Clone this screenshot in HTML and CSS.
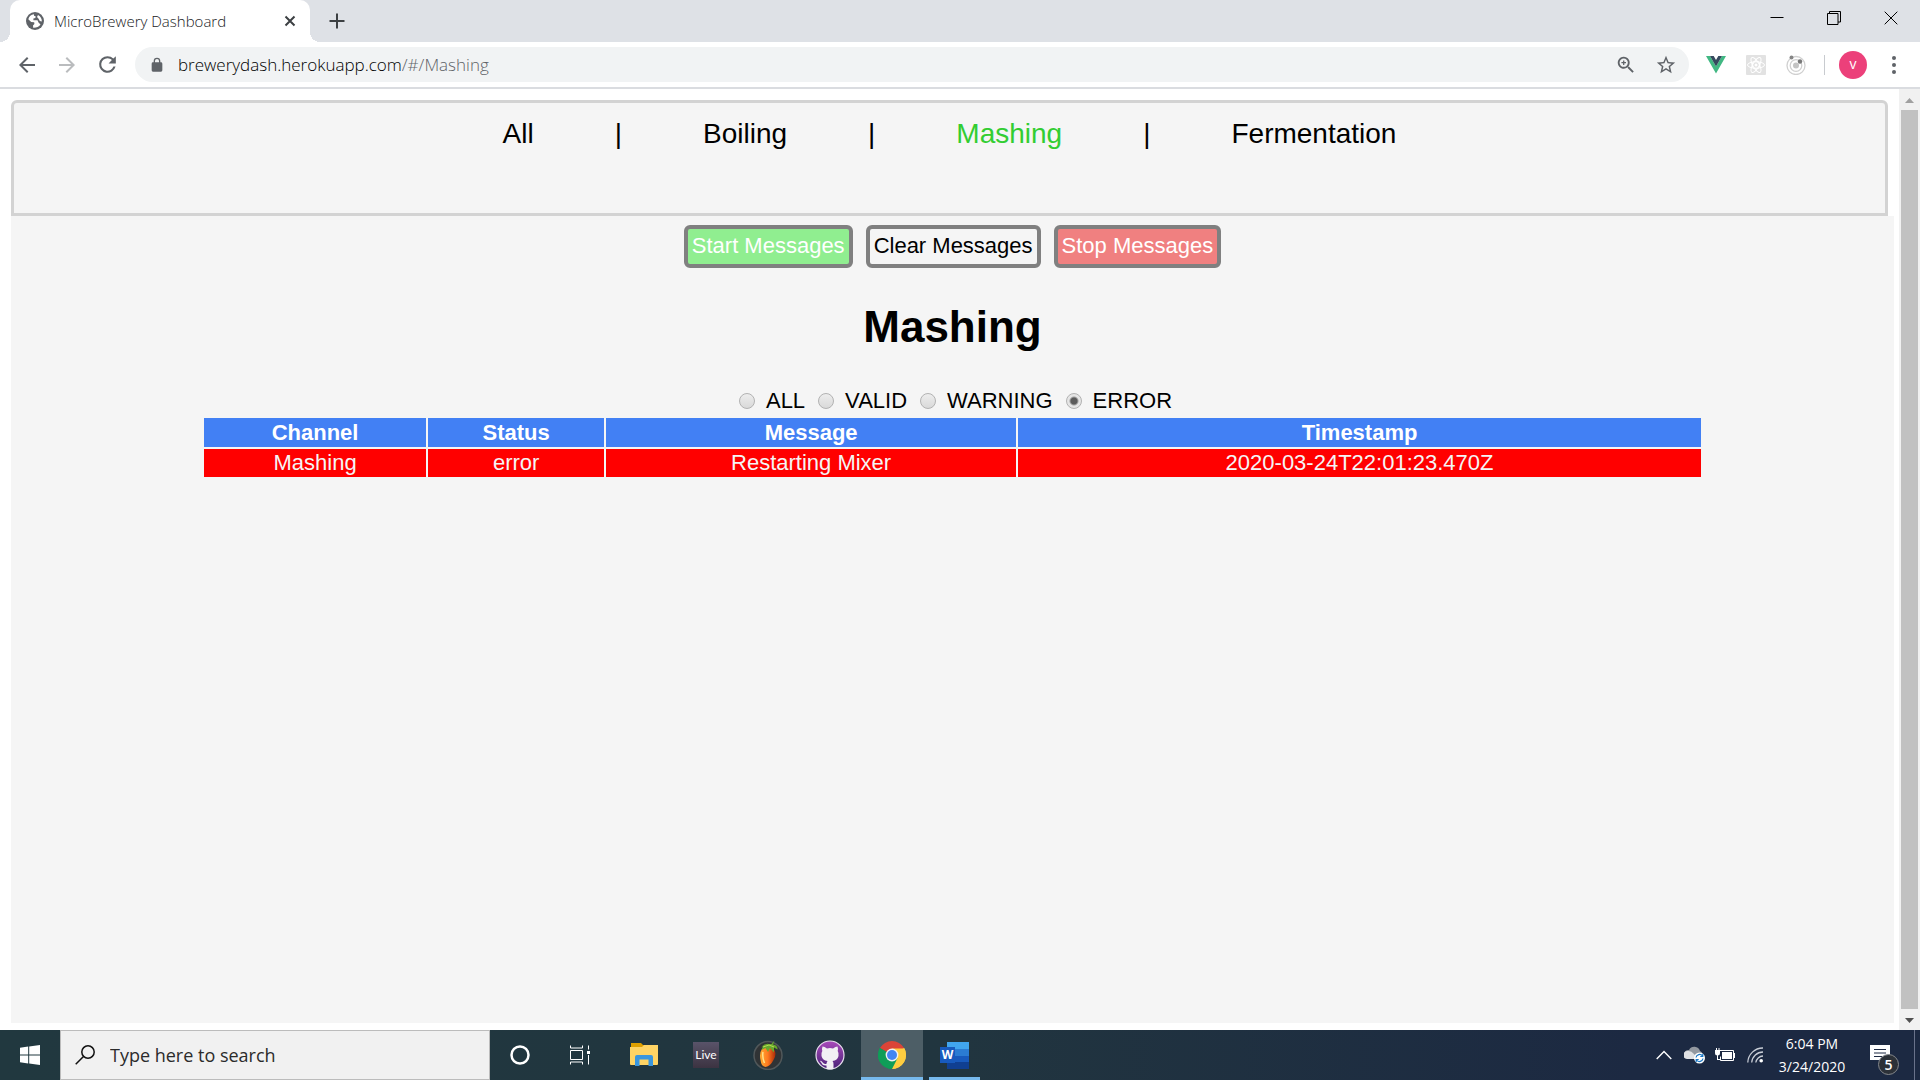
FILE: index.html
```html
<!DOCTYPE html>
<html lang="en">
<head>
<meta charset="utf-8">
<title>MicroBrewery Dashboard</title>
<link rel="stylesheet" href="styles.css">
</head>
<body>
<header class="browser">
  <div class="tab-strip">
    <div class="tab">
      <svg class="favicon" viewBox="0 0 18 18"><circle cx="9" cy="9" r="9" fill="#5f6368"/><path d="M8 2.200Q3.500 2.800 2.300 7.300L5.200 10 8.200 10.200 8.400 12 7 13.600 7.200 15.800Q12 16 14.500 12.500L12.500 10.600 11.500 8.200H7.400V6.600L9.400 6 9.600 4.200 8 3.800zM12 3l-1 2 1.600 1.800 1.200 2.200 2 .6Q16.200 5.500 12 3z" fill="#fff"/></svg>
      <span class="tab-title">MicroBrewery Dashboard</span>
      <button class="icon-button tab-close" aria-label="Close tab"><svg width="12" height="12" viewBox="0 0 12 12"><path d="M1.500 1.500l9 9M10.500 1.500l-9 9" stroke="#3c4043" stroke-width="2"/></svg></button>
    </div>
    <button class="icon-button new-tab" aria-label="New tab"><svg width="16" height="16" viewBox="0 0 16 16"><path d="M8 .5v15M.5 8h15" stroke="#3c4043" stroke-width="2"/></svg></button>
    <div class="window-controls">
      <button class="icon-button" aria-label="Minimize"><svg width="14" height="14" viewBox="0 0 14 14"><path d="M.5 6.500h13" stroke="#000"/></svg></button>
      <button class="icon-button" aria-label="Restore"><svg width="14" height="14" viewBox="0 0 14 14"><path d="M.5 2.500h10.500v11H.5zM2.500 2.500V.5h11v10.500h-2.500" fill="none" stroke="#000"/></svg></button>
      <button class="icon-button" aria-label="Close"><svg width="14" height="14" viewBox="0 0 14 14"><path d="M.7.7l12.600 12.600M13.300.7L.7 13.300" stroke="#000"/></svg></button>
    </div>
  </div>
  <div class="toolbar">
    <button class="icon-button tool" aria-label="Back"><svg width="24" height="24" viewBox="0 0 24 24" fill="#5f6368"><path d="M20 11H7.830l5.590-5.590L12 4l-8 8 8 8 1.410-1.410L7.830 13H20z"/></svg></button>
    <button class="icon-button tool" aria-label="Forward"><svg width="24" height="24" viewBox="0 0 24 24" fill="#babcbe"><path d="M4 11h12.170l-5.590-5.590L12 4l8 8-8 8-1.410-1.410L16.170 13H4z"/></svg></button>
    <button class="icon-button tool" aria-label="Reload"><svg width="25" height="25" viewBox="0 0 24 24" fill="#5f6368"><path d="M17.650 6.350A7.950 7.950 0 0 0 12 4a8 8 0 1 0 7.730 10h-2.080A6 6 0 1 1 12 6c1.660 0 3.140.69 4.220 1.780L13 11h7V4z"/></svg></button>
    <div class="omnibox">
      <svg width="16" height="16" viewBox="0 0 24 24" fill="#5f6368"><path d="M18 8h-1V6A5 5 0 0 0 7 6v2H6a2 2 0 0 0-2 2v10a2 2 0 0 0 2 2h12a2 2 0 0 0 2-2V10a2 2 0 0 0-2-2zM9 8V6a3 3 0 0 1 6 0v2z"/></svg>
      <div class="url"><label for="path">brewerydash.herokuapp.com</label><input id="path" type="text" value="/#/Mashing"></div>
      <button class="icon-button tool" aria-label="Zoom"><svg width="22" height="22" viewBox="0 0 24 24" fill="#5f6368"><path d="M15.500 14h-.79l-.28-.27A6.500 6.500 0 1 0 13.730 14.430l.27.28v.79l5 4.990L20.490 19zm-6 0a4.500 4.500 0 1 1 0-9 4.500 4.500 0 0 1 0 9zM12 8.800h-1.800V7H8.800v1.800H7v1.400h1.800V12h1.400v-1.800H12z"/></svg></button>
      <button class="icon-button tool" aria-label="Bookmark"><svg width="22" height="22" viewBox="0 0 24 24" fill="#5f6368"><path d="M22 9.240l-7.190-.62L12 2 9.190 8.630 2 9.240l5.460 4.730L5.820 21 12 17.270 18.180 21l-1.630-7.030zM12 15.400l-3.760 2.270 1-4.280-3.320-2.880 4.380-.38L12 6.100l1.710 4.040 4.380.38-3.320 2.880 1 4.280z"/></svg></button>
    </div>
    <div class="extensions">
      <button class="icon-button tool" aria-label="Vue"><svg width="20" height="18" viewBox="0 0 20 18"><path d="M0 0h4l6 10.500L16 0h4L10 17.500z" fill="#41b883"/><path d="M4 0h3.700L10 4l2.300-4H16l-6 10.500z" fill="#35495e"/></svg></button>
      <button class="icon-button tool" aria-label="React"><svg width="20" height="20" viewBox="0 0 20 20"><rect width="20" height="20" rx="1" fill="#e2e2e2"/><g fill="none" stroke="#fff"><ellipse cx="10" cy="10" rx="8.500" ry="3.200"/><ellipse cx="10" cy="10" rx="8.500" ry="3.200" transform="rotate(60 10 10)"/><ellipse cx="10" cy="10" rx="8.500" ry="3.200" transform="rotate(120 10 10)"/><circle cx="10" cy="10" r="4"/></g><circle cx="10" cy="10" r="1.500" fill="#fff"/></svg></button>
      <button class="icon-button tool" aria-label="Redux"><svg width="20" height="20" viewBox="0 0 20 20"><g fill="none" stroke="#d0d0d0" stroke-width="1.300"><circle cx="10" cy="10.500" r="9"/><circle cx="10" cy="10.500" r="5.800"/></g><circle cx="10" cy="10.500" r="3" fill="#c4c4c4"/><circle cx="5.500" cy="2.500" r="2" fill="#858585"/><circle cx="14" cy="6.500" r="2.200" fill="#777"/></svg></button>
    </div>
    <span class="separator"></span>
    <button class="avatar" aria-label="Profile">v</button>
    <button class="icon-button tool menu" aria-label="Menu"><svg width="4" height="18" viewBox="0 0 4 18" fill="#5f6368"><circle cx="2" cy="2" r="2"/><circle cx="2" cy="9" r="2"/><circle cx="2" cy="16" r="2"/></svg></button>
  </div>
</header>

<div class="viewport">
  <main class="page">
    <nav class="nav">
      <a href="#/">All</a><span>|</span><a href="#/Boiling">Boiling</a><span>|</span><a class="active" href="#/Mashing">Mashing</a><span>|</span><a href="#/Fermentation">Fermentation</a>
    </nav>
    <section class="dashboard">
      <div class="actions">
        <button class="action start">Start Messages</button>
        <button class="action">Clear Messages</button>
        <button class="action stop">Stop Messages</button>
      </div>
      <h1>Mashing</h1>
      <div class="filters">
        <label><input type="radio" name="status">ALL</label>
        <label><input type="radio" name="status">VALID</label>
        <label><input type="radio" name="status">WARNING</label>
        <label><input type="radio" name="status" checked>ERROR</label>
      </div>
      <table class="messages">
        <colgroup><col class="col-channel"><col class="col-status"><col class="col-message"><col class="col-time"></colgroup>
        <thead><tr><th>Channel</th><th>Status</th><th>Message</th><th>Timestamp</th></tr></thead>
        <tbody><tr><td>Mashing</td><td>error</td><td>Restarting Mixer</td><td>2020-03-24T22:01:23.470Z</td></tr></tbody>
      </table>
    </section>
  </main>
  <div class="scrollbar">
    <svg width="21" height="21" viewBox="0 0 21 21"><path d="M6 14l4.500-5 4.500 5z" fill="#a0a0a0"/></svg>
    <div class="thumb"></div>
    <svg width="21" height="21" viewBox="0 0 21 21"><path d="M6 9l4.500 5L15 9z" fill="#505050"/></svg>
  </div>
</div>

<footer class="taskbar">
  <button class="task start-menu" aria-label="Start"><svg width="20" height="20" viewBox="0 0 20 20" fill="#fff"><path d="M0 2.800l8.200-1.200v7.900H0zM9.200 1.400L20 0v9.500H9.200zM0 10.500h8.200v7.900L0 17.200zM9.200 10.500H20V20L9.200 18.600z"/></svg></button>
  <div class="search">
    <svg width="20" height="20" viewBox="0 0 20 20" fill="none" stroke="#111" stroke-width="1.500"><circle cx="13" cy="7" r="6.200"/><path d="M8.500 11.500L.7 19.300"/></svg>
    <input type="text" aria-label="Search" placeholder="Type here to search">
  </div>
  <button class="task" aria-label="Cortana"><svg width="20" height="20" viewBox="0 0 20 20"><circle cx="10" cy="10" r="8.500" fill="none" stroke="#fff" stroke-width="2.500"/></svg></button>
  <button class="task" aria-label="Task view"><svg width="20" height="20" viewBox="0 0 20 20" fill="none" stroke="#fff"><path d="M.5 5.500h12v9H.5zM.5.500v2.500h12V.5M.5 19.500v-2.500h12v2.500M18.500.5v4M18.500 10v9.500"/><path d="M17 6h3v3h-3z" fill="#fff" stroke="none"/></svg></button>
  <div class="apps">
    <button class="task" aria-label="File Explorer"><svg width="28" height="24" viewBox="0 0 28 24"><path d="M1 0h10l2 2h14v20H1z" fill="#dfa000"/><path d="M0 4h12l2-2h14v19a1 1 0 0 1-1 1H1a1 1 0 0 1-1-1z" fill="#ffd464"/><path d="M5 23V14a2 2 0 0 1 2-2h14a2 2 0 0 1 2 2v9h-4.500v-6.500h-9V23z" fill="#3a96dd"/></svg></button>
    <button class="task" aria-label="Live"><span class="live">Live</span></button>
    <button class="task" aria-label="FL Studio"><svg width="30" height="30" viewBox="0 0 30 30"><defs><linearGradient id="fruit" x1="0" x2="1"><stop offset="0" stop-color="#ffac30"/><stop offset=".5" stop-color="#ff7a20"/><stop offset="1" stop-color="#a92a08"/></linearGradient></defs><circle cx="15" cy="15.500" r="14" fill="#303335" stroke="#51585a" stroke-width="1.500"/><path d="M9 9Q6 13 7.500 20q1 7 5 7 5-1 8-7 4-7 0-11-6-4-11.500 0z" fill="url(#fruit)"/><path d="M10 12q-1 5 1.500 11" stroke="#ffe08a" stroke-width="1.500" fill="none"/><path d="M8 8q3-5 8-4l2.500 0 3-3.500-1.500 4q5 1 4.500 5l-3.500-2 0 5-4-4.500-2 4-2.500-4-4 2 1.500-4z" fill="#68a82d"/><path d="M10 7l6-2 5 2" stroke="#b5dc52" fill="none"/></svg></button>
    <button class="task" aria-label="GitHub Desktop"><svg width="30" height="30" viewBox="0 0 30 30"><defs><linearGradient id="git" x2="0" y2="1"><stop stop-color="#a94abb"/><stop offset="1" stop-color="#4a2278"/></linearGradient></defs><circle cx="15" cy="15" r="14" fill="url(#git)" stroke="#e8e0ee" stroke-width="1.200"/><path d="M7.500 6.500q2 0 4.500 2 3-.8 6 0 2.500-2 4.500-2 .8 2 .2 4.500Q24 13 23.500 16q-1 4.500-6 5 1 1 1 3v5q-3.500 1-7 0v-3.500q-4 .6-5-2.500-.8-1.500-1.800-2.200 2-.3 3 1.700 1.300 2 3.800 1.200.2-1.600 1-2.700-5-.5-6-5-.5-3 .8-5Q6.700 8.500 7.500 6.500z" fill="#f2eff4"/></svg></button>
    <button class="task current" aria-label="Google Chrome"><svg width="28" height="28" viewBox="0 0 28 28"><path d="M14 14L1.900 7A14 14 0 0 1 26.100 7z" fill="#db4437"/><path d="M14 14l12.100-7A14 14 0 0 1 14 28z" fill="#ffcd40"/><path d="M14 14v14A14 14 0 0 1 1.900 7z" fill="#0f9d58"/><path d="M14 7.600h12.500a14 14 0 0 1-12.500 20.400l5.500-10.800z" fill="#ffcd40"/><path d="M8.500 17.200L1.900 7A14 14 0 0 0 14 28l5.500-10.800z" fill="#0f9d58"/><circle cx="14" cy="14" r="6.400" fill="#f1f1f1"/><circle cx="14" cy="14" r="5" fill="#4285f4"/></svg></button>
    <button class="task word" aria-label="Word"><span class="word-icon"><span>W</span></span></button>
  </div>
  <div class="tray">
    <svg width="16" height="10" viewBox="0 0 16 10"><path d="M.7 9L8 1.500 15.300 9" fill="none" stroke="#fff" stroke-width="1.400"/></svg>
    <svg class="cloud" width="22" height="18" viewBox="0 0 22 18"><path d="M4 12a4 4 0 0 1 1-8 6 6 0 0 1 11 1 4 4 0 0 1 1 7z" fill="#9298a0"/><path d="M3 13a4 4 0 0 1 1-8q3-.5 6 3l4 5z" fill="#dfe1e4"/><circle cx="15.500" cy="12" r="5.500" fill="#fff"/><path d="M12 11.500a3.600 3.600 0 0 1 6.500-1.500M19 12.500a3.600 3.600 0 0 1-6.500 1.500M18.800 8v2.500h-2.500M12.200 16v-2.500h2.500" fill="none" stroke="#1976c5" stroke-width="1.200"/></svg>
    <svg width="20" height="14" viewBox="0 0 20 14"><path d="M5 2.500h13.500v10H5.500v-4" fill="none" stroke="#fff"/><path d="M7 4h10v7H7zM19 5h1v5h-1zM0 2h5v3a2.500 2.500 0 0 1-5 0zM1 0h1v2H1zM3.500 0h1v2h-1zM2 7h1v4h2v1H2z" fill="#fff"/></svg>
    <svg width="17" height="16" viewBox="0 0 17 16"><g fill="none" stroke="#c9ced7" stroke-width="1.300"><path d="M.8 15.500A15 15 0 0 1 16 1M4.700 15.500A11.500 11.500 0 0 1 16 5M8.800 15.500A7.500 7.500 0 0 1 16 9"/></g><circle cx="14.200" cy="13.800" r="1.800" fill="#fff"/></svg>
    <div class="clock"><time>6:04 PM</time><time>3/24/2020</time></div>
    <button class="icon-button notifications" aria-label="Notifications"><svg width="20" height="20" viewBox="0 0 20 20"><path d="M0 0h20v15h-7l-3.500 4V15H0z" fill="#fff"/><path d="M4 4.500h12M4 8h12M4 11.500h8" stroke="#1d2942"/></svg><span class="badge">5</span></button>
    <span class="show-desktop"></span>
  </div>
</footer>
</body>
</html>
```
FILE: styles.css
```css
* { box-sizing: border-box; }

body {
  margin: 0;
  height: 100vh;
  display: flex;
  flex-direction: column;
  background: #fff;
  font-family: "Liberation Sans", Arial, sans-serif;
  color: #000;
}

svg { display: block; flex: none; }

button {
  margin: 0;
  font-family: inherit;
}

.icon-button,
.task {
  display: flex;
  align-items: center;
  justify-content: center;
  padding: 0;
  border: 0;
  background: none;
}

/* Browser frame */
.tab-strip {
  display: flex;
  height: 42px;
  background: #dee1e6;
}

.tab {
  position: relative;
  display: flex;
  align-items: center;
  width: 300px;
  margin-left: 10px;
  padding: 0 10px 0 16px;
  border-radius: 10px 10px 0 0;
  background: #fff;
}

.tab::before,
.tab::after {
  content: "";
  position: absolute;
  bottom: 0;
  width: 10px;
  height: 10px;
}

.tab::before {
  right: 100%;
  background: radial-gradient(circle at 0 0, #dee1e6 10px, #fff 10px);
}

.tab::after {
  left: 100%;
  background: radial-gradient(circle at 100% 0, #dee1e6 10px, #fff 10px);
}

.favicon { width: 18px; height: 18px; }

.tab-title {
  flex: 1;
  margin-left: 10px;
  font: 300 15px "Open Sans", sans-serif;
  color: #202124;
  white-space: nowrap;
}

.tab-close { width: 20px; height: 20px; }

.new-tab { width: 36px; margin-left: 9px; }

.window-controls {
  display: flex;
  margin: 0 1px 0 auto;
}

.window-controls button {
  width: 57px;
  height: 36px;
}

.toolbar {
  display: flex;
  align-items: center;
  height: 47px;
  padding-left: 7px;
  border-bottom: 2px solid #dadce0;
}

.tool { width: 40px; height: 35px; }

.omnibox {
  flex: 1;
  display: flex;
  align-items: center;
  height: 35px;
  margin: 0 7px 0 8px;
  padding: 0 3px 0 14px;
  border-radius: 18px;
  background: #f1f3f4;
}

.url {
  flex: 1;
  display: flex;
  margin-left: 13px;
  font: 300 17px "Open Sans", sans-serif;
  color: #000;
}

.url input {
  flex: 1;
  padding: 0;
  border: 0;
  outline: 0;
  background: none;
  font: inherit;
  color: #5f6368;
}

.extensions { display: flex; }

.separator {
  width: 1px;
  height: 20px;
  margin: 0 14px 0 8px;
  background: #c8cbcf;
}

.avatar {
  width: 28px;
  height: 28px;
  padding: 0 0 2px;
  border: 0;
  border-radius: 50%;
  background: #ec407a;
  font: 14px "Open Sans", sans-serif;
  color: #fff;
}

.menu { width: 53px; }

/* Dashboard */
.viewport {
  flex: 1;
  display: flex;
  min-height: 0;
}

.page {
  flex: 1;
  display: flex;
  flex-direction: column;
  padding: 11px 5px 7px 11px;
}

.nav {
  display: flex;
  justify-content: center;
  gap: 81px;
  margin-right: 6px;
  padding: 15px 0 63px;
  border: 3px solid lightgray;
  border-radius: 6px 6px 0 0;
  background: whitesmoke;
  font-size: 28px;
  line-height: 32px;
}

.nav a { color: inherit; text-decoration: none; }

.nav .active { color: limegreen; }

.dashboard {
  flex: 1;
  padding-top: 9px;
  background: whitesmoke;
  font-size: 22px;
  line-height: 25px;
}

.actions {
  display: flex;
  justify-content: center;
  gap: 13px;
}

.action {
  padding: 4px 4px 6px;
  border: 4px solid gray;
  border-radius: 6px;
  background: whitesmoke;
  font-size: 22px;
  line-height: 25px;
  color: #000;
}

.start { background: lightgreen; color: #fff; }

.stop { background: lightcoral; color: #fff; }

h1 {
  margin: 34px 0 36px;
  font-size: 44px;
  line-height: 50px;
  text-align: center;
}

.filters {
  display: flex;
  justify-content: center;
  gap: 13px;
  margin-left: 6px;
  padding-bottom: 3px;
}

.filters label {
  display: flex;
  align-items: center;
  gap: 11px;
}

.filters input {
  appearance: none;
  width: 16px;
  height: 16px;
  margin: 0;
  border: 1px solid #b2b2b2;
  border-radius: 50%;
  background: linear-gradient(#ededed, #d9d9d9);
}

.filters input:checked {
  background: radial-gradient(circle, #5b5b5b 3px, #e5e5e5 5px);
}

.messages {
  width: calc(100% - 382px);
  margin: 0 auto;
  border-spacing: 2px;
  table-layout: fixed;
  text-align: center;
}

.col-channel { width: 14.9%; }
.col-status { width: 11.8%; }
.col-message { width: 27.5%; }
.col-time { width: 45.8%; }

.messages th {
  padding: 2px 0;
  background: #4280f4;
  color: #fff;
}

.messages td {
  padding: 1px 0 2px;
  background: red;
  color: whitesmoke;
}

.scrollbar {
  display: flex;
  flex-direction: column;
  width: 21px;
  background: #f1f1f1;
}

.thumb {
  flex: 1;
  margin: 0 2px;
  background: #c1c1c1;
}

/* Taskbar */
.taskbar {
  display: flex;
  height: 50px;
  background: linear-gradient(90deg, #21383f 0, #21353f 50%, #1c2942 85%);
}

.task { width: 60px; height: 50px; }

.search {
  display: flex;
  align-items: center;
  gap: 15px;
  width: 430px;
  padding-left: 14px;
  border: 1px solid #bcbcbc;
  background: #f1f1f1;
}

.search input {
  flex: 1;
  padding: 0;
  border: 0;
  outline: 0;
  background: none;
  font: 18px "Open Sans", sans-serif;
}

.search input::placeholder { color: #2b2b2b; }

.apps { display: flex; margin-left: 3px; }

.apps .task { width: 62px; }

.live {
  width: 26px;
  height: 26px;
  background: linear-gradient(#595369, #3c3341);
  font: 12px/26px Lato, sans-serif;
  color: #fff;
}

.apps .current {
  border-bottom: 3px solid #76b9ed;
  padding-top: 3px;
  background: #4d5e66;
}

.apps .word {
  width: 51px;
  margin-left: 6px;
  padding-top: 3px;
  border-bottom: 3px solid #76b9ed;
}

.word-icon {
  display: flex;
  align-items: center;
  width: 29px;
  height: 27px;
  background: linear-gradient(#41a5ee 7px, #2b7cd3 7px 14px, #185abd 14px 20px, #103f91 20px) right / 22px 27px no-repeat;
}

.word-icon span {
  width: 15px;
  background: #185abd;
  font: 700 12px/16px "Open Sans", sans-serif;
  color: #fff;
}

.tray {
  display: flex;
  align-items: center;
  margin-left: auto;
}

.tray > svg { margin-right: 12px; }

.tray > .cloud { margin-right: 9px; }

.clock {
  display: flex;
  flex-direction: column;
  width: 96px;
  margin-left: -12px;
  font: 14px/23px "Open Sans", sans-serif;
  text-align: center;
  color: #fff;
}

.notifications {
  position: relative;
  width: 40px;
  height: 50px;
}

.badge {
  position: absolute;
  left: 18px;
  top: 24px;
  width: 21px;
  height: 21px;
  border: 1px solid #85888c;
  border-radius: 50%;
  background: #2c3138;
  font: 600 14px/19px "Open Sans", sans-serif;
  color: #fff;
}

.show-desktop {
  width: 6px;
  height: 50px;
  margin-left: 14px;
  border-left: 1px solid #69728a;
}
```
